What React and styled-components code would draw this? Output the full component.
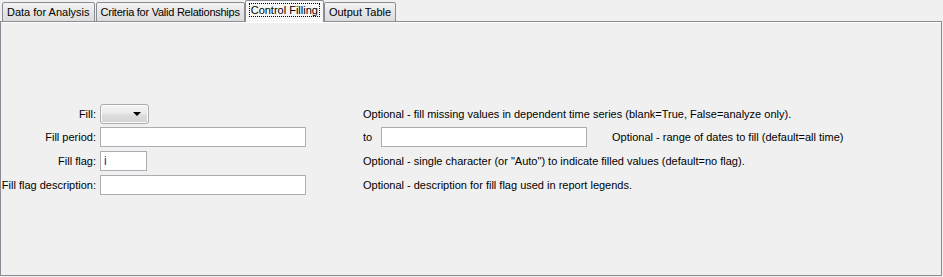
import styled, { createGlobalStyle } from "styled-components";

const GlobalStyle = createGlobalStyle`
  html, body {
    margin: 0;
    padding: 0;
    background: #f0f0f0;
  }
  body {
    font-family: "Liberation Sans", Arial, sans-serif;
    font-size: 11px;
    color: #000;
  }
`;

const Window = styled.div`
  width: 943px;
  height: 277px;
  background: #f0f0f0;
`;

const TabStrip = styled.div`
  display: flex;
  align-items: flex-end;
  height: 22px;
  padding-left: 2px;
  position: relative;
  z-index: 1;
`;

const Tab = styled.div`
  box-sizing: border-box;
  display: flex;
  align-items: center;
  height: ${p => (p.$active ? "22px" : "20px")};
  margin: ${p => (p.$active ? "0 0 0 -1px" : "0 1px 0 0")};
  padding: 0 4px;
  padding-bottom: ${p => (p.$active ? "3px" : "0")};
  border: 1px solid #898c95;
  border-bottom: ${p => (p.$active ? "none" : "1px solid #898c95")};
  border-radius: 2px 2px 0 0;
  background: ${p =>
    p.$active ? "#f7f7f7" : "linear-gradient(#f3f3f3, #e6e6e6 50%, #dcdcdc)"};
  color: #000;
  white-space: nowrap;
  letter-spacing: ${p => (p.$tight ? "-0.25px" : "normal")};
`;

const FocusLabel = styled.span`
  outline: 1px dotted #000;
  padding: 0 1px;
`;

const Panel = styled.div`
  box-sizing: border-box;
  width: 942px;
  height: 255px;
  margin-top: -1px;
  border: 1px solid #898c95;
  box-shadow: inset 0 1px 0 #ffffff;
  background: #f0f0f0;
  padding-top: 82px;
`;

const Form = styled.div`
  display: grid;
  grid-template-columns: 99px 263px 1fr;
  grid-template-rows: 19px 20px 20px 20px;
  row-gap: 4px;
`;

const Label = styled.div`
  display: flex;
  align-items: center;
  justify-content: flex-end;
  padding-right: 4px;
  white-space: nowrap;
`;

const Cell = styled.div`
  display: flex;
  align-items: center;
`;

const Note = styled.span`
  white-space: nowrap;
  margin-left: ${p => p.$offset || 0}px;
`;

const TextField = styled.div`
  box-sizing: border-box;
  width: ${p => p.$width}px;
  height: 20px;
  border: 1px solid #abadb3;
  background: #fff;
  display: flex;
  align-items: center;
  padding-left: 3px;
  color: #2a2a8c;
  font-size: 12px;
`;

const Combo = styled.div`
  box-sizing: border-box;
  width: 49px;
  height: 20px;
  border: 1px solid #acacac;
  border-radius: 3px;
  background: linear-gradient(#f4f4f4, #ebebeb 45%, #dddddd 55%, #d3d3d3);
  display: flex;
  align-items: center;
  justify-content: flex-end;
  padding-right: 7px;
  box-shadow: inset 0 0 0 1px #fcfcfc;
`;

const Arrow = styled.span`
  width: 0;
  height: 0;
  border-left: 4px solid transparent;
  border-right: 4px solid transparent;
  border-top: 4px solid #000;
  margin-top: 1px;
`;

const ToWord = styled.span`
  width: 18px;
`;

export default function App() {
  return (
    <Window>
      <GlobalStyle />
      <TabStrip>
        <Tab>Data for Analysis</Tab>
        <Tab $tight>Criteria for Valid Relationships</Tab>
        <Tab $active>
          <FocusLabel>Control Filling</FocusLabel>
        </Tab>
        <Tab>Output Table</Tab>
      </TabStrip>
      <Panel>
        <Form>
          <Label>Fill:</Label>
          <Cell>
            <Combo>
              <Arrow />
            </Combo>
          </Cell>
          <Cell>
            <Note>
              Optional - fill missing values in dependent time series (blank=True, False=analyze only).
            </Note>
          </Cell>

          <Label>Fill period:</Label>
          <Cell>
            <TextField $width={206} />
          </Cell>
          <Cell>
            <ToWord>to</ToWord>
            <TextField $width={206} />
            <Note $offset={25}>Optional - range of dates to fill (default=all time)</Note>
          </Cell>

          <Label>Fill flag:</Label>
          <Cell>
            <TextField $width={47}>i</TextField>
          </Cell>
          <Cell>
            <Note>
              Optional - single character (or "Auto") to indicate filled values (default=no flag).
            </Note>
          </Cell>

          <Label>Fill flag description:</Label>
          <Cell>
            <TextField $width={206} />
          </Cell>
          <Cell>
            <Note>Optional - description for fill flag used in report legends.</Note>
          </Cell>
        </Form>
      </Panel>
    </Window>
  );
}
